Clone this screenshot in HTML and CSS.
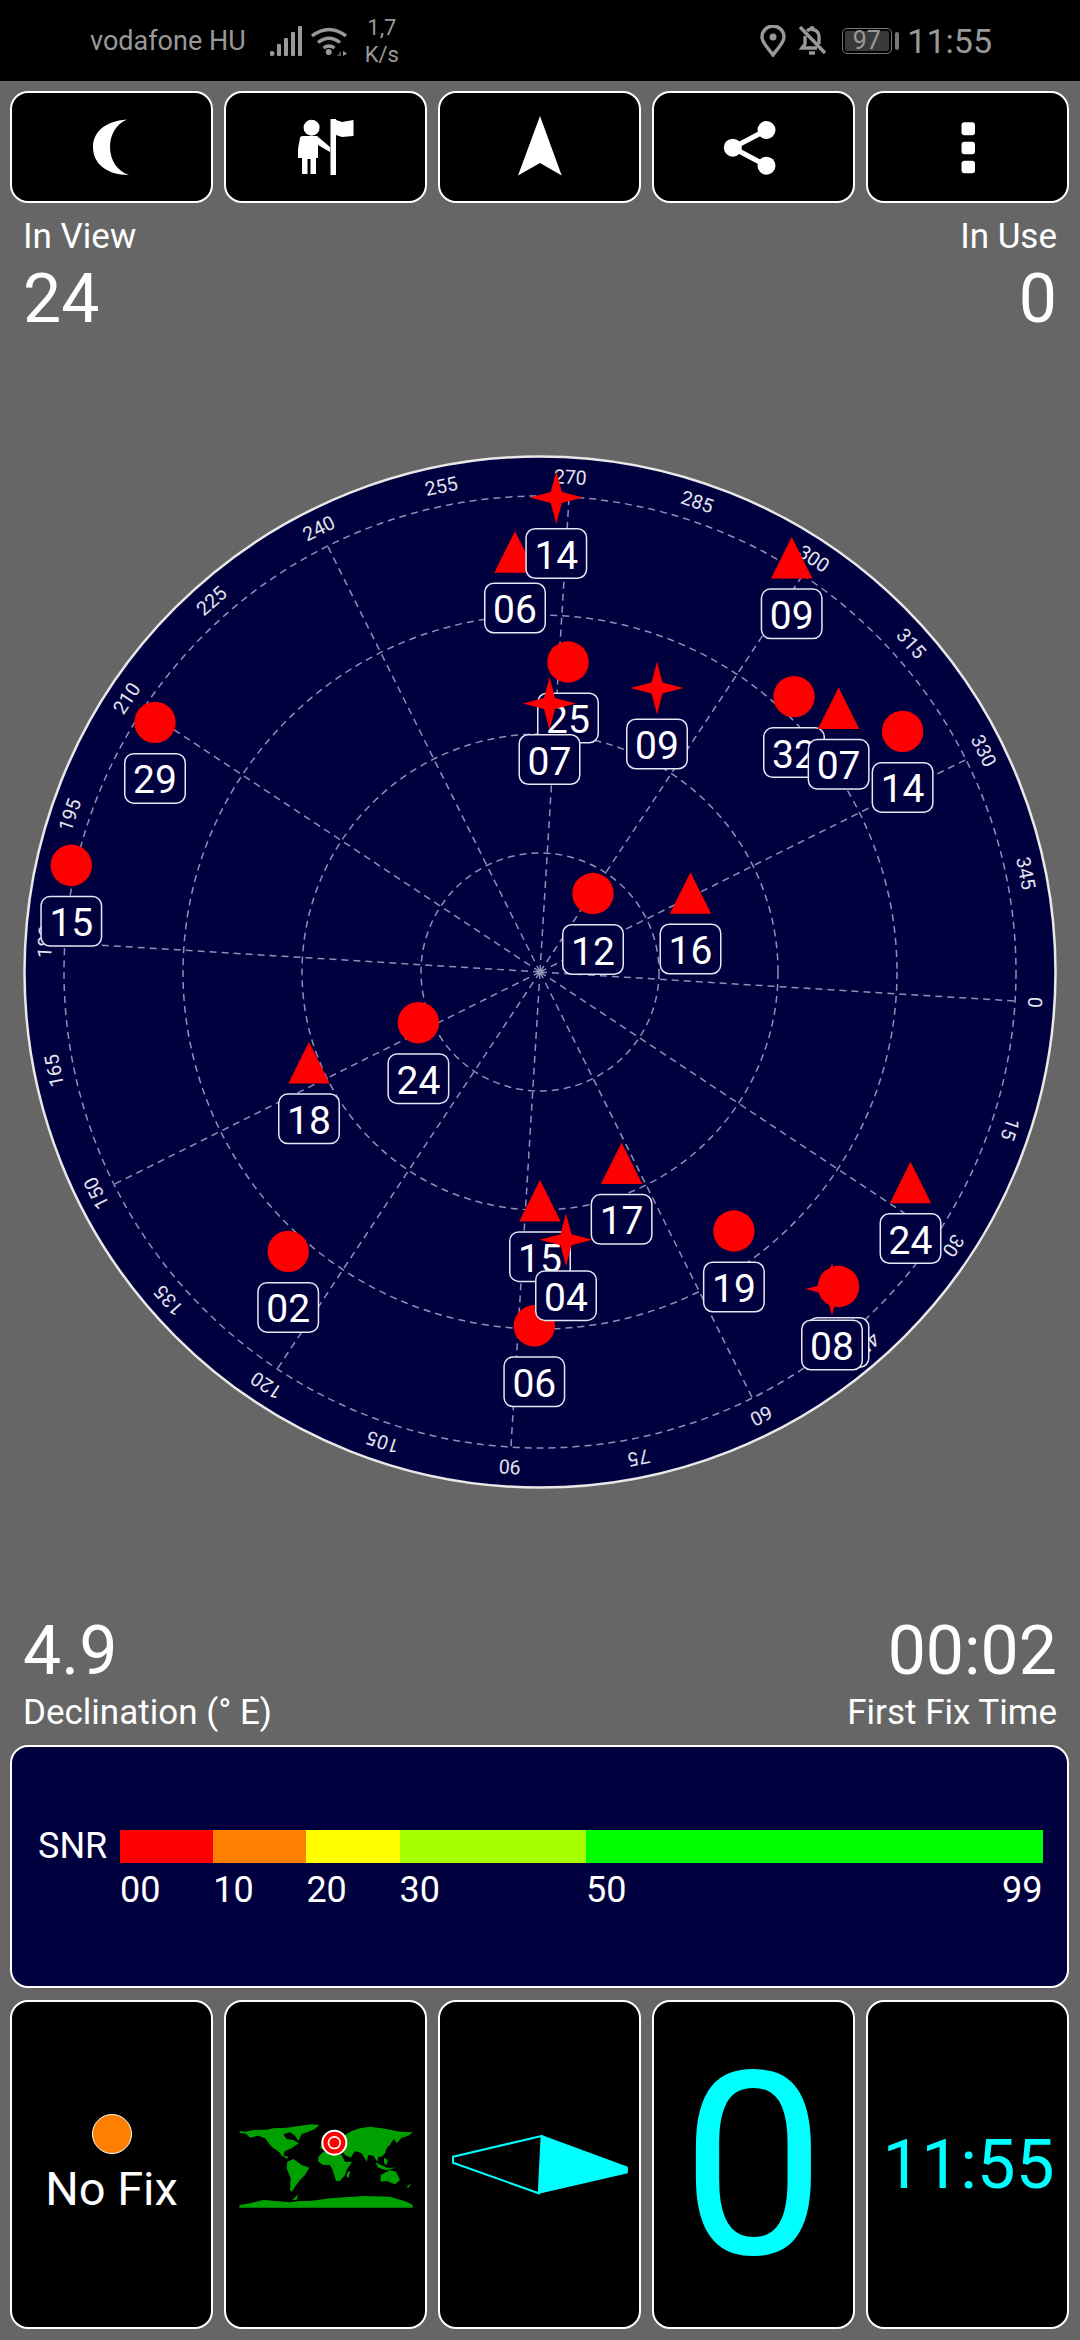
FILE: index.html
```html
<!DOCTYPE html>
<html lang="en">
<head>
  <meta charset="UTF-8">
  <meta name="viewport" content="width=device-width, initial-scale=1.0">
  <title>GPS Test</title>
  <link rel="stylesheet" href="styles.css">
</head>
<body>
  <header class="statusbar">
    <div class="status-left">
      <span class="carrier">vodafone HU</span>
      <svg class="signal" width="32" height="30" viewBox="0 0 32 30"><circle cx="2" cy="27.5" r="2.5"/><rect x="7" y="18" width="4" height="12" rx="1"/><rect x="14" y="12" width="4" height="18" rx="1"/><rect x="21" y="6" width="4" height="24" rx="1"/><rect x="28" y="0" width="4" height="30" rx="1"/></svg>
      <svg class="wifi" width="36" height="30" viewBox="0 0 36 30"><path class="arc" d="M1 10Q18-3 35 10"/><path class="arc" d="M7 16.5Q18 8 29 16.5"/><path class="arc" d="M12.5 22Q18 18 23.5 22"/><circle class="wifi-dot" cx="17.7" cy="26" r="3"/><path class="wifi-down" d="M26 30L30 25V30Z"/><path class="wifi-up" d="M32 25L36 27.5L32 30Z"/></svg>
      <span class="speed">1,7<br>K/s</span>
    </div>
    <div class="status-right">
      <svg class="pin" width="26" height="32" viewBox="0 0 26 32"><path class="arc" d="M13 30C9 24 2 18 2 12A11 11 0 0 1 24 12C24 18 17 24 13 30Z"/><circle class="wifi-dot" cx="13" cy="12" r="3.5"/></svg>
      <svg class="bell" width="28" height="31" viewBox="0 0 28 31"><path class="arc" d="M7 11V19L4 23H19"/><path class="arc" d="M9 6C12 3 21 4 21 12V19"/><path class="arc" d="M2 2L27 28"/><path class="arc" d="M11 28H17"/><circle class="wifi-dot" cx="14" cy="3.5" r="2.5"/></svg>
      <div class="battery-wrap">
        <span class="battery"><span class="battery-level">97</span></span>
        <span class="battery-nub"></span>
      </div>
      <span class="clock">11:55</span>
    </div>
  </header>

  <div class="tools">
    <button class="tool">
      <svg width="60" height="60" viewBox="0 0 60 60"><path d="M45 2.5C22 4 11 16 11 30C11 46 24 58 47 58C35 54 28 43 28 30C28 18 34 7 45 2.5Z"/></svg>
    </button>
    <button class="tool">
      <svg width="60" height="60" viewBox="0 0 60 60"><circle cx="15.6" cy="10.7" r="8"/><path d="M4 21Q4 19 7 19H21L34 30V35L22 28V41H20V57H14.5V42H11.5V57H6V41H2V32Z"/><rect x="34.5" y="2" width="5.5" height="56"/><path d="M40 3L46 5L57.5 3V19L46 20L40 18Z"/></svg>
    </button>
    <button class="tool">
      <svg width="60" height="60" viewBox="0 0 60 60"><path d="M30 -1L51.7 58.5L30 46L8 58.5Z"/></svg>
    </button>
    <button class="tool">
      <svg width="60" height="60" viewBox="0 0 60 60"><circle cx="42.5" cy="13" r="9"/><circle cx="8.8" cy="30.7" r="9"/><circle cx="42.5" cy="48.7" r="9"/><path class="share-line" d="M42.5 13L8.8 30.7L42.5 48.7"/></svg>
    </button>
    <button class="tool">
      <svg width="60" height="60" viewBox="0 0 60 60"><rect x="23.5" y="5.3" width="13.5" height="13" rx="3"/><rect x="23.5" y="24.7" width="13.5" height="12.5" rx="3"/><rect x="23.5" y="43.7" width="13.5" height="12.5" rx="3"/></svg>
    </button>
  </div>

  <section class="stats stats-top">
    <div>
      <div class="stat-label">In View</div>
      <div class="stat-value">24</div>
    </div>
    <div class="stat-right">
      <div class="stat-label">In Use</div>
      <div class="stat-value">0</div>
    </div>
  </section>

  <svg class="sky" width="1080" height="1280" viewBox="0 336 1080 1280">
    <defs>
      <circle id="dot" r="20.7"/>
      <path id="tri" d="M0-20.7L20.7 20.7H-20.7Z"/>
      <path id="star" d="M0-26.5L5.5-5.5L26.5 0L5.5 5.5L0 26.5L-5.5 5.5L-26.5 0L-5.5-5.5Z"/>
      <rect id="box" x="-30.25" y="31.25" width="60.5" height="49.5" rx="9"/>
    </defs>

    <circle class="horizon" cx="540" cy="973" r="515.5"/>
    <circle class="ring" cx="540" cy="973" r="119"/>
    <circle class="ring" cx="540" cy="973" r="238"/>
    <circle class="ring" cx="540" cy="973" r="357"/>
    <circle class="ring" cx="540" cy="973" r="476"/>
    <circle class="hub" cx="540" cy="973" r="3"/>

    <g transform="translate(540 973) rotate(3.5)">
      <line class="ring" x2="476"/>
      <line class="ring" x2="476" transform="rotate(30)"/>
      <line class="ring" x2="476" transform="rotate(60)"/>
      <line class="ring" x2="476" transform="rotate(90)"/>
      <line class="ring" x2="476" transform="rotate(120)"/>
      <line class="ring" x2="476" transform="rotate(150)"/>
      <line class="ring" x2="476" transform="rotate(180)"/>
      <line class="ring" x2="476" transform="rotate(210)"/>
      <line class="ring" x2="476" transform="rotate(240)"/>
      <line class="ring" x2="476" transform="rotate(270)"/>
      <line class="ring" x2="476" transform="rotate(300)"/>
      <line class="ring" x2="476" transform="rotate(330)"/>

      <text class="az" y="7" transform="translate(496) rotate(90)">0</text>
      <text class="az" y="7" transform="rotate(15) translate(496) rotate(90)">15</text>
      <text class="az" y="7" transform="rotate(30) translate(496) rotate(90)">30</text>
      <text class="az" y="7" transform="rotate(45) translate(496) rotate(90)">45</text>
      <text class="az" y="7" transform="rotate(60) translate(496) rotate(90)">60</text>
      <text class="az" y="7" transform="rotate(75) translate(496) rotate(90)">75</text>
      <text class="az" y="7" transform="rotate(90) translate(496) rotate(90)">90</text>
      <text class="az" y="7" transform="rotate(105) translate(496) rotate(90)">105</text>
      <text class="az" y="7" transform="rotate(120) translate(496) rotate(90)">120</text>
      <text class="az" y="7" transform="rotate(135) translate(496) rotate(90)">135</text>
      <text class="az" y="7" transform="rotate(150) translate(496) rotate(90)">150</text>
      <text class="az" y="7" transform="rotate(165) translate(496) rotate(90)">165</text>
      <text class="az" y="7" transform="rotate(180) translate(496) rotate(90)">180</text>
      <text class="az" y="7" transform="rotate(195) translate(496) rotate(90)">195</text>
      <text class="az" y="7" transform="rotate(210) translate(496) rotate(90)">210</text>
      <text class="az" y="7" transform="rotate(225) translate(496) rotate(90)">225</text>
      <text class="az" y="7" transform="rotate(240) translate(496) rotate(90)">240</text>
      <text class="az" y="7" transform="rotate(255) translate(496) rotate(90)">255</text>
      <text class="az" y="7" transform="rotate(270) translate(496) rotate(90)">270</text>
      <text class="az" y="7" transform="rotate(285) translate(496) rotate(90)">285</text>
      <text class="az" y="7" transform="rotate(300) translate(496) rotate(90)">300</text>
      <text class="az" y="7" transform="rotate(315) translate(496) rotate(90)">315</text>
      <text class="az" y="7" transform="rotate(330) translate(496) rotate(90)">330</text>
      <text class="az" y="7" transform="rotate(345) translate(496) rotate(90)">345</text>
    </g>

    <g class="sat" transform="translate(155 723.4)"><use href="#dot"/><use class="box" href="#box"/><text y="71">29</text></g>
    <g class="sat" transform="translate(71.3 866.3)"><use href="#dot"/><use class="box" href="#box"/><text y="71">15</text></g>
    <g class="sat" transform="translate(515 553)"><use href="#tri"/><use class="box" href="#box"/><text y="71">06</text></g>
    <g class="sat" transform="translate(556.3 498.5)"><use href="#star"/><use class="box" href="#box"/><text y="71">14</text></g>
    <g class="sat" transform="translate(568 663)"><use href="#dot"/><use class="box" href="#box"/><text y="71">25</text></g>
    <g class="sat" transform="translate(549.5 704.5)"><use class="box" href="#box"/><use href="#star"/><text y="71">07</text></g>
    <g class="sat" transform="translate(657 689)"><use href="#star"/><use class="box" href="#box"/><text y="71">09</text></g>
    <g class="sat" transform="translate(791.7 558.8)"><use href="#tri"/><use class="box" href="#box"/><text y="71">09</text></g>
    <g class="sat" transform="translate(794 697.6)"><use href="#dot"/><use class="box" href="#box"/><text y="71">32</text></g>
    <g class="sat" transform="translate(838.6 709.3)"><use href="#tri"/><use class="box" href="#box"/><text y="71">07</text></g>
    <g class="sat" transform="translate(902.6 732.4)"><use href="#dot"/><use class="box" href="#box"/><text y="71">14</text></g>
    <g class="sat" transform="translate(593 894.5)"><use href="#dot"/><use class="box" href="#box"/><text y="71">12</text></g>
    <g class="sat" transform="translate(690.5 894)"><use href="#tri"/><use class="box" href="#box"/><text y="71">16</text></g>
    <g class="sat" transform="translate(418.4 1023.7)"><use href="#dot"/><use class="box" href="#box"/><text y="71">24</text></g>
    <g class="sat" transform="translate(309 1063.8)"><use href="#tri"/><use class="box" href="#box"/><text y="71">18</text></g>
    <g class="sat" transform="translate(288.2 1252.4)"><use href="#dot"/><use class="box" href="#box"/><text y="71">02</text></g>
    <g class="sat" transform="translate(621.6 1164.3)"><use href="#tri"/><use class="box" href="#box"/><text y="71">17</text></g>
    <g class="sat" transform="translate(540 1201.7)"><use href="#tri"/><use class="box" href="#box"/><text y="71">15</text></g>
    <g class="sat" transform="translate(534.3 1326.8)"><use href="#dot"/><use class="box" href="#box"/><text y="71">06</text></g>
    <g class="sat" transform="translate(566 1240.7)"><use href="#star"/><use class="box" href="#box"/><text y="71">04</text></g>
    <g class="sat" transform="translate(733.9 1232)"><use href="#dot"/><use class="box" href="#box"/><text y="71">19</text></g>
    <g class="sat" transform="translate(910.5 1183.5)"><use href="#tri"/><use class="box" href="#box"/><text y="71">24</text></g>
    <g class="sat" transform="translate(838.5 1287.5)"><use href="#dot"/><use class="box" href="#box"/></g>
    <g class="sat" transform="translate(832 1290)"><use href="#star"/><use class="box" href="#box"/><text y="71">08</text></g>
  </svg>

  <section class="stats">
    <div>
      <div class="stat-value">4.9</div>
      <div class="stat-label">Declination (° E)</div>
    </div>
    <div class="stat-right">
      <div class="stat-value">00:02</div>
      <div class="stat-label">First Fix Time</div>
    </div>
  </section>

  <section class="snr">
    <div class="snr-row">
      <span class="snr-name">SNR</span>
      <div class="snr-scale">
        <div class="snr-bar">
          <span class="seg seg-10 c-red"></span>
          <span class="seg seg-10 c-orange"></span>
          <span class="seg seg-10 c-yellow"></span>
          <span class="seg seg-20 c-lime"></span>
          <span class="seg seg-49 c-green"></span>
        </div>
        <div class="snr-ticks">
          <span class="seg seg-10">00</span>
          <span class="seg seg-10">10</span>
          <span class="seg seg-10">20</span>
          <span class="seg seg-20">30</span>
          <span class="seg seg-49 tick-last"><span>50</span><span>99</span></span>
        </div>
      </div>
    </div>
  </section>

  <div class="panels">
    <div class="panel">
      <span class="fix-dot"></span>
      <span class="fix-text">No Fix</span>
    </div>
    <div class="panel">
      <svg class="world" width="192" height="100" viewBox="0 0 576 300" preserveAspectRatio="none">
        <path d="M28 48L48 50L70 45L110 44L130 40L170 38L205 33L245 28L268 30L255 42L235 50L215 58L205 78L195 62L180 52L160 58L170 72L190 75L207 84L195 92L185 100L165 108L160 122L175 125L172 131L155 122L148 112L125 95L105 70L85 62L60 68L48 56L30 54Z"/>
        <path d="M172 140L190 132L215 150L238 158L225 180L210 195L195 215L186 230L180 225L182 190L170 160Z"/>
        <path d="M265 125L280 110L310 110L335 120L345 140L366 140L350 165L345 180L330 198L318 198L308 165L300 150L280 150L265 140Z"/>
        <path d="M270 100L285 60L345 60L365 48L390 40L420 35L470 42L510 50L548 52L535 62L515 68L500 85L492 72L482 85L470 100L465 115L455 125L445 125L442 140L430 122L415 120L410 140L395 115L375 108L362 128L345 120L335 105L300 105Z"/>
        <path d="M352 172L361 168L356 188L350 186Z"/>
        <path d="M475 82L487 68L480 94Z"/>
        <path d="M436 142L470 158L496 158L470 166L445 158Z"/>
        <path d="M462 128L474 135L470 150L462 145Z"/>
        <path d="M452 180L480 165L498 170L510 195L495 208L470 198L452 200Z"/>
        <path d="M530 215L545 203L535 219Z"/>
        <path d="M186 256L205 238L200 254Z"/>
        <path d="M28 278V270L60 265L100 255L135 258L180 262L210 258L240 258L300 250L400 243L480 245L530 260L548 270V278Z"/>
        <circle class="target-ring" cx="313" cy="83" r="39"/>
        <circle class="target-core" cx="313" cy="83" r="33"/>
        <circle class="target-ring" cx="313" cy="83" r="20"/>
        <circle class="target-core" cx="313" cy="83" r="15"/>
      </svg>
    </div>
    <div class="panel">
      <svg class="compass" width="190" height="70" viewBox="0 0 190 70">
        <path class="compass-tail" d="M8 26.7L96.6 6L93.8 63.3L8 32.7Z"/>
        <path class="compass-head" d="M96.6 5L182.8 36.7V43.3L93.8 63.8Z"/>
      </svg>
    </div>
    <div class="panel"><span class="big-count">0</span></div>
    <div class="panel"><span class="panel-clock">11:55</span></div>
  </div>
</body>
</html>
```

FILE: styles.css
```css
:root{--grey:#666;--navy:#00003f;--line:#8f8fb4;--cyan:#0ff;--status:#999}
html,body{margin:0;padding:0}
body{width:1080px;height:2340px;overflow:hidden;background:var(--grey);color:#fff;font-family:Roboto,"Liberation Sans",sans-serif;font-weight:400}

/* status bar */
.statusbar{height:81px;background:#000;color:var(--status);display:flex;justify-content:space-between;align-items:center;padding:0 88px 0 90px}
.status-left,.status-right{display:flex;align-items:center}
.carrier{font-size:27px;margin-right:24px}
.signal{fill:var(--status);margin-right:9px}
.wifi{margin-right:18px}
.arc{fill:none;stroke:var(--status);stroke-width:3.4}
.wifi-dot{fill:var(--status)}
.wifi-down{fill:#555}
.wifi-up{fill:var(--status)}
.speed{font-size:22px;line-height:27px;text-align:center}
.pin{margin-right:12px}
.bell{margin-right:16px}
.battery-wrap{display:flex;align-items:center;gap:3px;margin-right:8.5px}
.battery{display:block;width:50px;height:26px;box-sizing:border-box;border:1.5px solid #777;border-radius:5px;padding:2px}
.battery-level{display:block;height:100%;background:#3a3a3a;border-radius:2px;font-size:25px;line-height:19px;text-align:center}
.battery-nub{width:4px;height:18px;background:#777;border-radius:2px}
.clock{font-size:34px}

/* top buttons */
.tools,.panels{display:grid;grid-template-columns:repeat(5,1fr);gap:11px;padding:0 11px 0 10px}
.tools{margin-top:10px;height:112px}
.tool{display:flex;align-items:center;justify-content:center;padding:0;background:#000;border:2.5px solid #fff;border-radius:18px}
.tool svg{fill:#fff;overflow:visible}
.share-line{fill:none;stroke:#fff;stroke-width:5}

/* stats rows */
.stats{display:flex;justify-content:space-between;padding:0 23px}
.stats-top{padding-top:14px}
.stat-right{text-align:right}
.stat-label{font-size:35px;line-height:40px}
.stat-value{font-size:68px;line-height:72px}
.stats-top .stat-value{margin-top:6px}
.stats:not(.stats-top) .stat-label{margin-top:6px}

/* sky plot */
.sky{display:block}
.horizon{fill:var(--navy);stroke:#e8e8e8;stroke-width:2.5}
.ring{fill:none;stroke:var(--line);stroke-width:1.5;stroke-dasharray:7 5}
.hub{fill:#ddd}
.az{fill:#e4e4ee;font-size:19.5px;text-anchor:middle}
.sat{fill:#f00}
.box{fill:var(--navy);stroke:#e6e6f4;stroke-width:1.5}
.sat text{fill:#fff;font-size:39px;text-anchor:middle}

/* snr */
.snr{box-sizing:border-box;height:243px;margin:12px 11px 0 10px;padding:82.5px 24.5px 0 26px;background:var(--navy);border:2.5px solid #fff;border-radius:18px}
.snr-row{display:flex;align-items:flex-start}
.snr-name{width:82px;font-size:36px;line-height:33px}
.snr-scale{flex:1}
.snr-bar,.snr-ticks{display:flex}
.snr-bar{height:33px}
.snr-ticks{font-size:36px;line-height:42px;margin-top:6px}
.seg{display:block}
.seg-10{flex:10}
.seg-20{flex:20}
.seg-49{flex:49}
.c-red{background:#f00}
.c-orange{background:#ff8000}
.c-yellow{background:#ff0}
.c-lime{background:#a6ff00}
.c-green{background:#0f0}
.tick-last{display:flex;justify-content:space-between}

/* bottom panels */
.panels{margin-top:12px;height:329px}
.panel{display:flex;flex-direction:column;align-items:center;justify-content:center;overflow:hidden;background:#000;border:2.5px solid #fff;border-radius:18px}
.fix-dot{width:38px;height:38px;background:#ff8000;border:1.5px solid #fff;border-radius:50%;margin-bottom:8px}
.fix-text{font-size:47px;line-height:54px}
.world{fill:#00a000;flex:none}
.target-ring{fill:#fff}
.target-core{fill:#f00}
.compass{flex:none;overflow:visible}
.compass-tail{fill:none;stroke:var(--cyan);stroke-width:2}
.compass-head{fill:var(--cyan)}
.big-count{color:var(--cyan);font-size:256px;line-height:300px;padding-top:4px}
.panel-clock{color:var(--cyan);font-size:69px;line-height:80px;padding-left:2px}
```
